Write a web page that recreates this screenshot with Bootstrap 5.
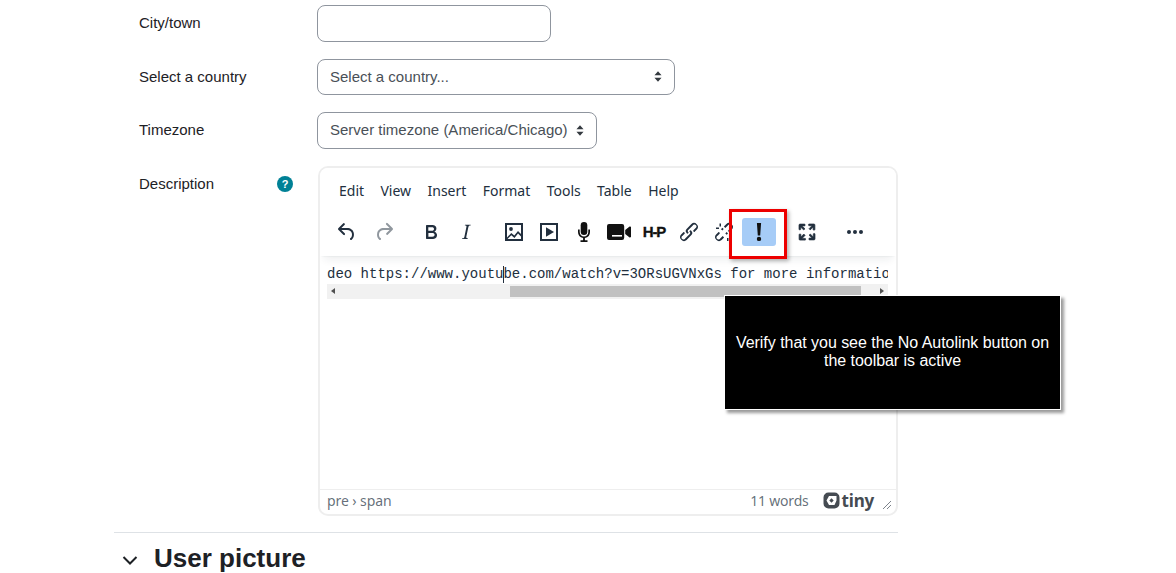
<!DOCTYPE html>
<html lang="en">
<head>
<meta charset="utf-8">
<title>Edit profile</title>
<link href="https://cdn.jsdelivr.net/npm/bootstrap@5.3.0/dist/css/bootstrap.min.css" rel="stylesheet">
<style>
html,body{height:573px;overflow:hidden}
body{font-family:"Liberation Sans",Arial,sans-serif;font-size:15px;color:#1d2125;background:#fff;position:relative}
.pagecol{margin-left:114px;width:784px;padding-top:5px}
.frow{display:flex;margin-bottom:17px}
.frow label{width:203px;padding-left:25px;padding-top:8px;line-height:20px;flex:none;margin:0}
.fld{height:36.5px;border:1px solid #8f959e;border-radius:8px;color:#495057;background:#fff;display:flex;align-items:center;padding:0 12px;font-size:15px}
.fld-city{width:234px}
.fld-country{width:358px;justify-content:space-between}
.fld-tz{width:280px;justify-content:space-between}
.arrows{display:block;width:8px;height:11px}
.descrow{display:flex}
.desclabel{width:203px;flex:none;display:flex;justify-content:space-between;padding:8px 24px 0 25px;line-height:20px}
.helpq{width:16px;height:16px;border-radius:50%;background:#008196;color:#fff;font-size:11px;font-weight:700;line-height:16px;text-align:center;margin-top:2px}
.edbox{width:580px;height:350px;margin-left:1px;border:2px solid #eee;border-radius:10px;display:flex;flex-direction:column;overflow:hidden;background:#fff;font-family:"Noto Sans",sans-serif;color:#222f3e}
.edhead{height:88px;box-shadow:0 2px 2px -2px rgba(34,47,62,.1),0 8px 8px -4px rgba(34,47,62,.07);flex:none;position:relative;z-index:1;background:#fff}
.edmenu{display:flex;gap:16.4px;padding:13px 0 0 19px;font-size:14px;line-height:20px;height:36px}
.edmenu span{display:block}
.edtools{display:flex;padding:14px 0 0 10px}
.tb{width:34px;height:28px;margin-right:1px;display:flex;align-items:center;justify-content:center;border-radius:3px;flex:none}
.tb svg{display:block;width:24px;height:24px;fill:#222f3e}
.tb.dim svg{fill:rgba(34,47,62,.5)}
.tb.on{background:#a6ccf7}
.g2{margin-left:12px}
.g3{margin-left:13px}
.r2{margin-left:2px}
.hfive{font:700 15px/1 "Liberation Sans",sans-serif;letter-spacing:-1.1px;color:#111;-webkit-text-stroke:.3px #111}
.thick path{stroke:#222f3e;stroke-width:.7}
.edbody{flex:1;padding:7px 7px 0;min-height:0}
.codeline{font:14px/23px "Liberation Mono",monospace;white-space:pre;overflow:hidden;color:#222f3e;width:561px;position:relative;height:21px}
.caret{position:absolute;left:176px;top:3px;width:1px;height:17px;background:#222f3e}
.hbar{width:561px;height:15px;background:#f1f1f1;display:flex;align-items:center;justify-content:space-between;padding:0 4px;position:relative}
.hthumb{position:absolute;left:183px;top:2px;width:351px;height:11px;background:#c1c1c1}
.tri-l{width:0;height:0;border:3px solid transparent;border-right:4px solid #505050;border-left:0}
.tri-r{width:0;height:0;border:3px solid transparent;border-left:4px solid #505050;border-right:0}
.edstatus{height:25px;border-top:1px solid #eee;flex:none;display:flex;align-items:center;font-size:14px;color:rgba(34,47,62,.7);padding:0 7px 2px;line-height:20px}
.edstatus .path{letter-spacing:-.1px}
.edstatus .wc{margin-left:auto;letter-spacing:-.2px;margin-right:14px}
.tinymark{display:flex;align-items:center;gap:2px;font-weight:700;font-size:17px;color:#454b52;margin-right:8px;letter-spacing:-.2px;line-height:20px}
.grip{display:block;margin-right:-3px;margin-top:8px}
.sect{margin-top:16px;border-top:1px solid #dee2e6;padding:10px 0 0 8px;display:flex;align-items:center;gap:16px}
.sect h3{font:700 26px/30px "Liberation Sans",sans-serif;margin:0;color:#1d2125}
.chev{display:block;width:16px;height:16px;margin-top:4px}
.redmark{position:absolute;left:729px;top:209px;width:58px;height:50px;border:3px solid #ed0000;box-shadow:2px 2px 4px rgba(0,0,0,.3);z-index:3}
.callout{position:absolute;left:724px;top:295px;width:337px;height:115px;background:#000;color:#fff;border:1px solid #fff;box-shadow:3px 3px 3px rgba(0,0,0,.4);display:flex;align-items:center;justify-content:center;text-align:center;font-size:16px;line-height:18px;padding:0 6px 2px;letter-spacing:-.04px;z-index:4}
</style>
</head>
<body>
<div class="pagecol">
  <div class="frow"><label>City/town</label><div class="fld fld-city"></div></div>
  <div class="frow"><label>Select a country</label><div class="fld fld-country"><span>Select a country...</span><svg class="arrows" viewBox="0 0 9 12"><path d="M4.500 0 8.500 4.600H.5ZM4.500 12 .5 7.400H8.500Z" fill="#343a40"/></svg></div></div>
  <div class="frow"><label>Timezone</label><div class="fld fld-tz"><span>Server timezone (America/Chicago)</span><svg class="arrows" viewBox="0 0 9 12"><path d="M4.500 0 8.500 4.600H.5ZM4.500 12 .5 7.400H8.500Z" fill="#343a40"/></svg></div></div>
  <div class="descrow">
    <div class="desclabel"><span>Description</span><span class="helpq">?</span></div>
    <div class="edbox">
      <div class="edhead">
        <div class="edmenu"><span>Edit</span><span>View</span><span>Insert</span><span>Format</span><span>Tools</span><span>Table</span><span>Help</span></div>
        <div class="edtools">
          <div class="tb"><svg viewBox="0 0 24 24"><path d="M6.400 8H12c3.700 0 6.200 2 6.800 5.100.6 2.700-.4 5.600-2.300 6.800a1 1 0 0 1-1-1.800c1.100-.6 1.800-2.700 1.400-4.600-.5-2.100-2.100-3.500-4.900-3.500H6.400l3.300 3.300a1 1 0 1 1-1.400 1.400l-5-5a1 1 0 0 1 0-1.400l5-5a1 1 0 0 1 1.400 1.400L6.400 8Z"/></svg></div>
          <div class="tb dim r2"><svg viewBox="0 0 24 24"><path d="M17.600 10H12c-2.800 0-4.400 1.400-4.900 3.500-.4 2 .3 4 1.400 4.600a1 1 0 1 1-1 1.800c-2-1.200-2.900-4.100-2.300-6.800.6-3 3-5.100 6.800-5.100h5.600l-3.300-3.300a1 1 0 1 1 1.400-1.400l5 5a1 1 0 0 1 0 1.400l-5 5a1 1 0 0 1-1.400-1.400l3.300-3.300Z"/></svg></div>
          <div class="tb g2"><svg viewBox="0 0 24 24"><path d="M7.800 19c-.3 0-.5 0-.6-.2l-.2-.5V5.700c0-.2 0-.4.2-.5l.6-.2h5c1.500 0 2.700.3 3.500 1 .7.6 1.100 1.400 1.100 2.500a3 3 0 0 1-.6 1.900c-.4.6-1 1-1.600 1.200.4.1.9.3 1.300.6s.8.7 1 1.200c.4.4.5 1 .5 1.600 0 1.300-.4 2.300-1.300 3-.8.7-2.100 1-3.800 1H7.800Zm5-8.300c.6 0 1.200-.1 1.600-.5.4-.3.6-.7.6-1.300 0-1.100-.8-1.700-2.300-1.700H9.300v3.500h3.400Zm.5 6c.7 0 1.300-.1 1.700-.4.4-.4.6-.9.6-1.500s-.2-1-.7-1.400c-.4-.3-1-.4-2-.4H9.400v3.800h4Z"/></svg></div>
          <div class="tb"><svg viewBox="0 0 24 24"><path d="m16.700 4.700-.1.9h-.3c-.6 0-1 0-1.400.3-.3.3-.4.6-.5 1.100l-2.100 9.800v.6c0 .5.4.8 1.400.8h.2l-.2.8H8l.2-.8h.2c1.100 0 1.800-.5 2-1.500l2-9.800.1-.5c0-.6-.4-.8-1.400-.8h-.3l.2-.9h5.800Z"/></svg></div>
          <div class="tb g3"><svg viewBox="0 0 24 24"><path fill-rule="evenodd" d="M3 3h18v18H3ZM5 5v14h14V5Z"/><circle cx="9" cy="9" r="1.900"/><path d="M5 17.500 9.300 13l3 2.600L16 11l3 3v2.500l-3-3-3.500 4.400-3.200-2.600L5 19.600Z"/></svg></div>
          <div class="tb"><svg viewBox="0 0 24 24"><path fill-rule="evenodd" d="M3 3h18v18H3ZM5 5v14h14V5Z"/><path d="M9 7.200 17 12l-8 4.800Z"/></svg></div>
          <div class="tb"><svg viewBox="0 0 24 24"><g fill="#111"><rect x="8.700" y="2" width="6.600" height="13" rx="3.300"/><path d="M6 9.500h1.700v2.600a4.300 4.300 0 0 0 8.600 0V9.500H18v2.600a6 6 0 0 1-5.100 5.900v2.300h2.600V22h-7v-1.700h2.600V18A6 6 0 0 1 6 12.100Z"/></g></svg></div>
          <div class="tb"><svg viewBox="0 0 24 24"><path fill="#111" d="M2 4h13a2.200 2.200 0 0 1 2.200 2.200v11.600A2.200 2.200 0 0 1 15 20H2a2 2 0 0 1-2-2V6a2 2 0 0 1 2-2ZM18.200 10l4.400-3.400c.5-.3 1.400 0 1.400.8v9.200c0 .8-.9 1.100-1.400.8L18.200 14Z"/><rect x="5" y="15" width="10" height="1.600" fill="#fff"/></svg></div>
          <div class="tb"><span class="hfive">H-P</span></div>
          <div class="tb"><svg viewBox="0 0 24 24"><path d="M6.200 12.300a1 1 0 0 1 1.400 1.400l-2 2a2 2 0 1 0 2.600 2.800l4.800-4.800a1 1 0 0 0 0-1.400 1 1 0 1 1 1.400-1.300 2.900 2.900 0 0 1 0 4L9.600 20a3.900 3.900 0 0 1-5.500-5.500l2-2Zm11.600-.6a1 1 0 0 1-1.400-1.400l2-2a2 2 0 1 0-2.600-2.800L11 10.300a1 1 0 0 0 0 1.400A1 1 0 1 1 9.600 13a2.900 2.900 0 0 1 0-4L14.400 4a3.900 3.900 0 0 1 5.500 5.500l-2 2Z"/></svg></div>
          <div class="tb"><svg viewBox="0 0 24 24"><path d="M6.200 12.300a1 1 0 0 1 1.400 1.400l-2 2a2 2 0 1 0 2.600 2.800l2.500-2.500 1.400 1.400L9.600 20a3.900 3.900 0 0 1-5.500-5.500l2-2Zm11.600-.6a1 1 0 0 1-1.400-1.400l2-2a2 2 0 1 0-2.600-2.800l-2.500 2.500-1.400-1.400L14.400 4a3.900 3.900 0 0 1 5.500 5.500l-2 2ZM9 9.200l1.300-1.400 1.400 1.300-1.300 1.400ZM13.300 13.500l1.300-1.400 1.400 1.300-1.300 1.400ZM4 7.500h3V9H4ZM7.500 3.500H9v3H7.500ZM17 15.500h3V17h-3ZM15 18h1.500v3H15ZM17.800 9.200l1 1-.9.900-1-1Z"/></svg></div>
          <div class="tb on"><svg viewBox="0 0 24 24"><path fill="#111" d="M9.900 3h4.200l-.9 12.500h-2.400ZM12 16.700a2.200 2.200 0 1 1 0 4.400 2.200 2.200 0 0 1 0-4.400Z"/></svg></div>
          <div class="tb g3 thick"><svg viewBox="0 0 24 24"><path d="m15.300 10-1.200-1.300 2.900-3h-2.300a.9.900 0 1 1 0-1.700H19c.5 0 .9.400.9.900v4.400a.9.900 0 1 1-1.800 0V7l-2.900 3Zm0 4 3 3v-2.300a.9.900 0 1 1 1.700 0V19c0 .5-.4.900-.9.900h-4.400a.9.900 0 1 1 0-1.800H17l-3-2.900 1.300-1.200ZM10 15.400l-2.900 3h2.300a.9.900 0 1 1 0 1.700H5a.9.900 0 0 1-.9-.9v-4.400a.9.900 0 1 1 1.800 0V17l2.900-3 1.200 1.300ZM8.700 10 5.700 7v2.300a.9.900 0 0 1-1.700 0V5c0-.5.400-.9.900-.9h4.400a.9.900 0 0 1 0 1.800H7l3 2.900-1.300 1.200Z"/></svg></div>
          <div class="tb g3"><svg viewBox="0 0 24 24"><path d="M6 10a2 2 0 0 0-2 2c0 1.100.9 2 2 2a2 2 0 0 0 2-2 2 2 0 0 0-2-2Zm12 0a2 2 0 0 0-2 2c0 1.100.9 2 2 2a2 2 0 0 0 2-2 2 2 0 0 0-2-2Zm-6 0a2 2 0 0 0-2 2c0 1.100.9 2 2 2a2 2 0 0 0 2-2 2 2 0 0 0-2-2Z"/></svg></div>
        </div>
      </div>
      <div class="edbody">
        <div class="codeline">deo https://www.youtube.com/watch?v=3ORsUGVNxGs for more information<span class="caret"></span></div>
        <div class="hbar"><span class="tri-l"></span><span class="hthumb"></span><span class="tri-r"></span></div>
      </div>
      <div class="edstatus">
        <span class="path">pre › span</span>
        <span class="wc">11 words</span>
        <span class="tinymark"><svg width="17" height="17" viewBox="0 0 17 17"><path fill="#454b52" fill-rule="evenodd" d="M5.500.5h6a5 5 0 0 1 5 5v6a5 5 0 0 1-5 5h-6a5 5 0 0 1-5-5v-6a5 5 0 0 1 5-5ZM6 4 3.500 8.500 6 13h5.500l2-4.500V4Z"/><path fill="#454b52" d="M8.500 6.300 10.700 8.500 8.500 10.700 6.300 8.500Z"/></svg>tiny</span>
        <svg class="grip" width="10" height="10" viewBox="0 0 10 10"><path d="M1 9 9 1M5 9 9 5" stroke="#7c838b" stroke-width="1" fill="none"/></svg>
      </div>
    </div>
  </div>
  <div class="sect">
    <svg class="chev" viewBox="0 0 16 16"><path d="M1.500 5 8 11.500 14.500 5" fill="none" stroke="#1d2125" stroke-width="2"/></svg>
    <h3>User picture</h3>
  </div>
</div>
<div class="redmark"></div>
<div class="callout">Verify that you see the No Autolink button on the toolbar is active</div>
<script src="https://cdn.jsdelivr.net/npm/bootstrap@5.3.0/dist/js/bootstrap.bundle.min.js"></script>
</body>
</html>
